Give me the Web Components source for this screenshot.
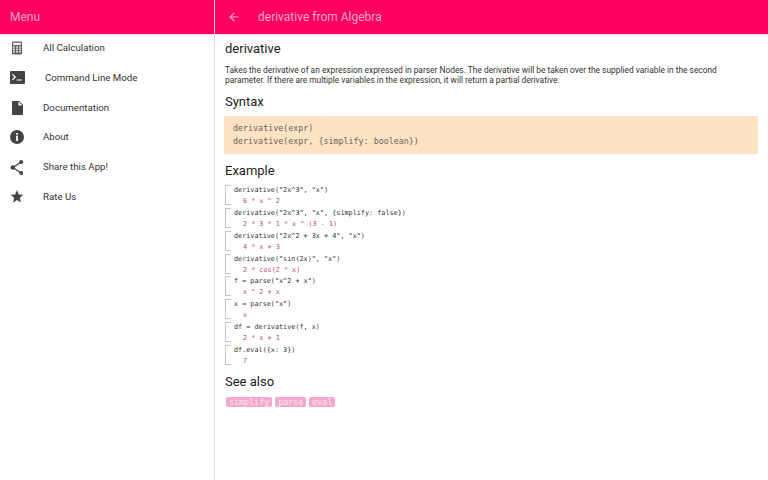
<!DOCTYPE html>
<html>
<head>
<meta charset="utf-8">
<title>derivative</title>
<style>
html, body { margin: 0; height: 100%; background: #fff; font-family: Roboto, sans-serif; overflow: hidden; }
</style>
</head>
<body>
<app-shell>
  <side-menu slot="menu">
    <menu-item label="All Calculation"><svg viewBox="0 0 18 18" style="opacity:.85"><path fill-rule="evenodd" d="M5 2.500h8a1 1 0 0 1 1 1v11a1 1 0 0 1-1 1H5a1 1 0 0 1-1-1v-11a1 1 0 0 1 1-1zM5.200 3.700V6h7.600V3.700zM5.200 7.200v1.600h1.600V7.200zm3 0v1.600h1.600V7.200zm3 0v1.600h1.600V7.200zM5.200 9.600v1.600h1.600V9.600zm3 0v1.600h1.600V9.600zm3 0v1.600h1.600V9.600zM5.200 12v1.600h1.600V12zm3 0v1.600h1.600V12zm3 0v1.600h1.600V12z"/></svg></menu-item>
    <menu-item label="Command Line Mode" shift><svg viewBox="0 0 18 18"><path fill-rule="evenodd" d="M3 2h13a1 1 0 0 1 1 1v11a1 1 0 0 1-1 1H3a1 1 0 0 1-1-1V3a1 1 0 0 1 1-1zm1 3.800l2.300 2.300L4 10.400l.9.900 3.200-3.200-3.200-3.200zM8.800 10.400v1.200h5v-1.200z"/></svg></menu-item>
    <menu-item label="Documentation"><svg viewBox="0 0 18 18"><path fill-rule="evenodd" d="M5 3h6l4 4v9a1 1 0 0 1-1 1H5a1 1 0 0 1-1-1V4a1 1 0 0 1 1-1zm5.500.800v3.700h3.700z"/></svg></menu-item>
    <menu-item label="About"><svg viewBox="0 0 18 18"><path fill-rule="evenodd" d="M9 2a7 7 0 1 0 0 14A7 7 0 0 0 9 2zM8.100 5h1.800v1.800H8.100zm0 2.800h1.800V13H8.100z"/></svg></menu-item>
    <menu-item label="Share this App!"><svg viewBox="0 0 18 18"><circle cx="13.200" cy="4" r="2"/><circle cx="4.800" cy="9.500" r="2.200"/><circle cx="13.200" cy="15" r="2"/><path d="M13.200 4L4.800 9.500l8.400 5.500" fill="none" stroke="#444" stroke-width="1.300"/></svg></menu-item>
    <menu-item label="Rate Us"><svg viewBox="0 0 18 18"><path d="M9 3l1.800 4.400 4.500.4-3.400 3 1 4.700L9 13.100l-3.900 2.400 1-4.700-3.400-3 4.500-.4z"/></svg></menu-item>
  </side-menu>
  <doc-page slot="main" heading="derivative from Algebra">
    <h-title top="7">derivative</h-title>
    <doc-text>Takes the derivative of an expression expressed in parser Nodes. The derivative will be taken over the supplied variable in the second parameter. If there are multiple variables in the expression, it will return a partial derivative.</doc-text>
    <h-title top="9">Syntax</h-title>
    <syntax-box>derivative(expr)
derivative(expr, {simplify: boolean})</syntax-box>
    <h-title top="9">Example</h-title>
    <example-list>
      <example-cell in='derivative("2x^3", "x")' out="6 * x ^ 2"></example-cell>
      <example-cell in='derivative("2x^3", "x", {simplify: false})' out="2 * 3 * 1 * x ^ (3 - 1)"></example-cell>
      <example-cell in='derivative("2x^2 + 3x + 4", "x")' out="4 * x + 3"></example-cell>
      <example-cell in='derivative("sin(2x)", "x")' out="2 * cos(2 * x)"></example-cell>
      <example-cell in='f = parse("x^2 + x")' out="x ^ 2 + x"></example-cell>
      <example-cell in='x = parse("x")' out="x"></example-cell>
      <example-cell in='df = derivative(f, x)' out="2 * x + 1"></example-cell>
      <example-cell in='df.eval({x: 3})' out="7"></example-cell>
    </example-list>
    <h-title top="7">See also</h-title>
    <see-also><tag-chip>simplify</tag-chip><tag-chip>parse</tag-chip><tag-chip>eval</tag-chip></see-also>
  </doc-page>
</app-shell>
<script>
function define(name, css, html, init) {
  customElements.define(name, class extends HTMLElement {
    constructor() {
      super();
      this.attachShadow({ mode: "open" }).innerHTML = "<style>" + css + "</style>" + html;
    }
    connectedCallback() {
      if (init) init.call(this, this.shadowRoot);
    }
  });
}

define("app-shell", `
  :host { display: flex; width: 768px; height: 480px; }
  .menu { width: 214px; flex: none; border-right: 1px solid #dedede; }
  .main { flex: 1; min-width: 0; }
`, `<div class="menu"><slot name="menu"></slot></div><div class="main"><slot name="main"></slot></div>`);

define("side-menu", `
  :host { display: block; }
  header { height: 34px; background: #ff0060; color: #ffa8cc; font-size: 12px; line-height: 34px; padding-left: 10px; box-shadow: 0 1px 0 #ffd0e0; position: relative; }
  .list { margin-top: -1px; }
`, `<header>Menu</header><div class="list"><slot></slot></div>`);

define("menu-item", `
  :host { display: flex; align-items: center; height: 29.700px; color: #333; font-size: 9.700px; }
  .icon { width: 18px; height: 18px; margin-left: 8px; flex: none; }
  ::slotted(svg) { width: 18px; height: 18px; fill: #444; display: block; }
  .label { margin-left: 17px; }
  :host([shift]) .label { margin-left: 19px; }
`, `<div class="icon"><slot></slot></div><div class="label"></div>`, function (root) {
  root.querySelector(".label").textContent = this.getAttribute("label");
});

define("doc-page", `
  :host { display: block; }
  header { height: 34px; background: #ff0060; color: #ffa8cc; font-size: 12px; display: flex; align-items: center; box-shadow: 0 1px 0 #ffd0e0; }
  svg { width: 14px; height: 14px; margin-left: 12px; fill: #ffa8cc; }
  .title { margin-left: 17px; }
  .body { padding: 0 10px; }
`, `<header><svg viewBox="0 0 24 24"><path d="M20 11H7.800l5.600-5.600L12 4l-8 8 8 8 1.400-1.400L7.800 13H20z"/></svg><span class="title"></span></header><div class="body"><slot></slot></div>`, function (root) {
  root.querySelector(".title").textContent = this.getAttribute("heading");
});

define("h-title", `
  :host { display: block; color: #222; font-size: 13px; line-height: 16px; }
`, `<slot></slot>`, function () {
  this.style.marginTop = this.getAttribute("top") + "px";
});

define("doc-text", `
  :host { display: block; color: #333; font-size: 8.400px; line-height: 10px; margin: 8px 10px 0 0; }
`, `<slot></slot>`);

define("syntax-box", `
  :host { display: block; background: #fde2c4; color: #6b6256; font: 8.350px/13px "DejaVu Sans Mono", monospace; white-space: pre; padding: 5.500px 8px 6.500px 9px; margin: 6px 0 0 -1px; }
`, `<slot></slot>`);

define("example-list", `
  :host { display: block; margin-top: 5px; }
`, `<slot></slot>`);

define("example-cell", `
  :host { display: block; position: relative; height: 22.850px; font: 6.800px/11px "DejaVu Sans Mono", monospace; white-space: pre; padding: 1px 0 0 9px; box-sizing: border-box; }
  .mark { position: absolute; left: 0; top: 1px; width: 5px; height: 18px; border: 1px solid #c4c4c4; border-right: 0; }
  .in { color: #333; }
  .out { color: #c2487f; padding-left: 9px; }
`, `<div class="mark"></div><div class="in"></div><div class="out"></div>`, function (root) {
  root.querySelector(".in").textContent = this.getAttribute("in");
  root.querySelector(".out").textContent = this.getAttribute("out");
});

define("see-also", `
  :host { display: flex; gap: 3px; margin: 7px 0 0 1px; }
`, `<slot></slot>`);

define("tag-chip", `
  :host { display: block; background: #f5a8cc; color: #fbe6ef; font: 8.350px/10px "DejaVu Sans Mono", monospace; padding: 0 3px; border-radius: 2px; }
`, `<slot></slot>`);
</script>
</body>
</html>
